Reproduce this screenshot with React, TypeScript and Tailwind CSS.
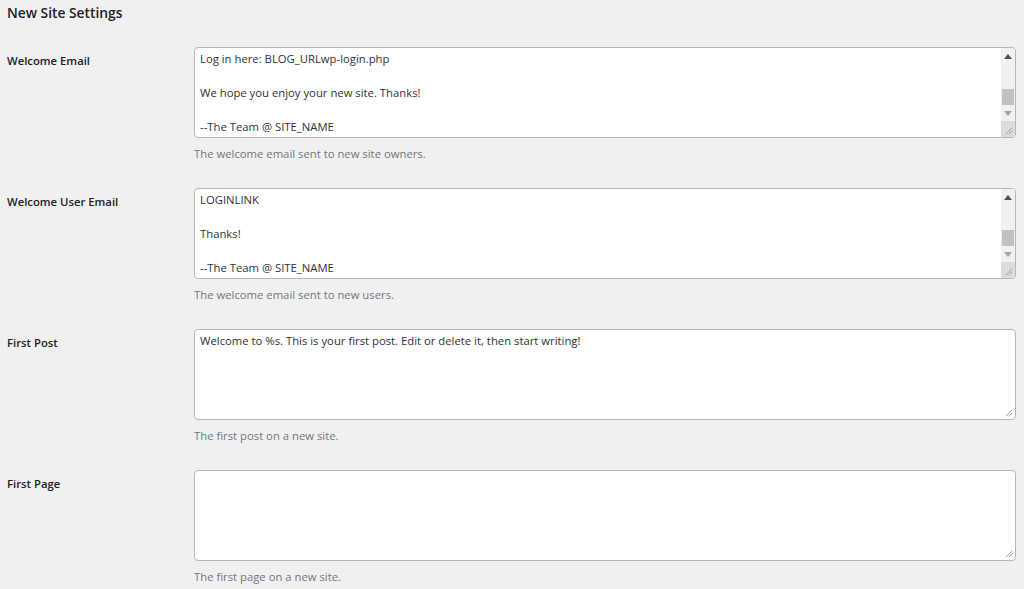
import React from "react";

type Field = {
  id: string;
  label: string;
  lines: string[];
  description: string;
  scroll: boolean;
};

const fields: Field[] = [
  {
    id: "welcome_email",
    label: "Welcome Email",
    lines: ["Log in here: BLOG_URLwp-login.php", "", "We hope you enjoy your new site. Thanks!", "", "--The Team @ SITE_NAME"],
    description: "The welcome email sent to new site owners.",
    scroll: true,
  },
  {
    id: "welcome_user_email",
    label: "Welcome User Email",
    lines: ["LOGINLINK", "", "Thanks!", "", "--The Team @ SITE_NAME"],
    description: "The welcome email sent to new users.",
    scroll: true,
  },
  {
    id: "first_post",
    label: "First Post",
    lines: ["Welcome to %s. This is your first post. Edit or delete it, then start writing!"],
    description: "The first post on a new site.",
    scroll: false,
  },
  {
    id: "first_page",
    label: "First Page",
    lines: [],
    description: "The first page on a new site.",
    scroll: false,
  },
];

const Grip = () => (
  <svg width="10" height="10" viewBox="0 0 10 10" className="absolute bottom-[2px] right-[2px]">
    <path d="M9 3 L3 9 M9 6 L6 9" stroke="#a0a0a0" strokeWidth="1" strokeLinecap="round" />
  </svg>
);

const Scrollbar = () => (
  <div className="flex w-[14px] shrink-0 flex-col bg-[#f1f1f1]">
    {/* up arrow */}
    <div className="flex h-[16px] items-center justify-center">
      <svg width="8" height="5" viewBox="0 0 8 5">
        <path d="M0 5 L4 0 L8 5 Z" fill="#505050" />
      </svg>
    </div>
    <div className="flex flex-1 flex-col justify-end">
      <div className="mx-[1px] h-[16px] bg-[#c1c1c1]" />
    </div>
    {/* down arrow */}
    <div className="flex h-[16px] items-center justify-center">
      <svg width="8" height="5" viewBox="0 0 8 5">
        <path d="M0 0 L4 5 L8 0 Z" fill="#a3a3a3" />
      </svg>
    </div>
    <div className="relative h-[16px] bg-[#dcdcdc]">
      <Grip />
    </div>
  </div>
);

const SettingRow = ({ label, lines, description, scroll }: Field) => {
  return (
    <div className="flex">
      <div className="w-[187px] shrink-0 pt-[6px] text-[11.3px] leading-[16px] font-semibold text-[#1d2327]">
        {label}
      </div>
      <div className="flex-1">
        <div className="relative flex h-[91px] overflow-hidden rounded-[4px] border border-[#b4b7ba] bg-white">
          <div className="flex-1 px-[5px] pt-[2px] text-[11.3px] leading-[17px] text-[#2c3338]">
            {lines.map((line, i) => (
              <div key={i} className="h-[17px] whitespace-pre">
                {line}
              </div>
            ))}
          </div>
          {scroll ? <Scrollbar /> : <Grip />}
        </div>
        <p className="mt-[8px] mb-[26px] text-[11.3px] leading-[16px] text-[#72777c]">{description}</p>
      </div>
    </div>
  );
};

export default function App() {
  return (
    <div
      className="min-h-[589px] w-full bg-[#f0f0f1] pr-[8px] pl-[7px]"
      style={{ fontFamily: '"Open Sans", "Noto Sans", sans-serif' }}
    >
      <h2 className="pt-[3px] text-[13.8px] leading-[20px] font-semibold text-[#1d2327]">New Site Settings</h2>
      <div className="mt-[24px]">
        {fields.map((field) => (
          <SettingRow key={field.id} {...field} />
        ))}
      </div>
    </div>
  );
}
